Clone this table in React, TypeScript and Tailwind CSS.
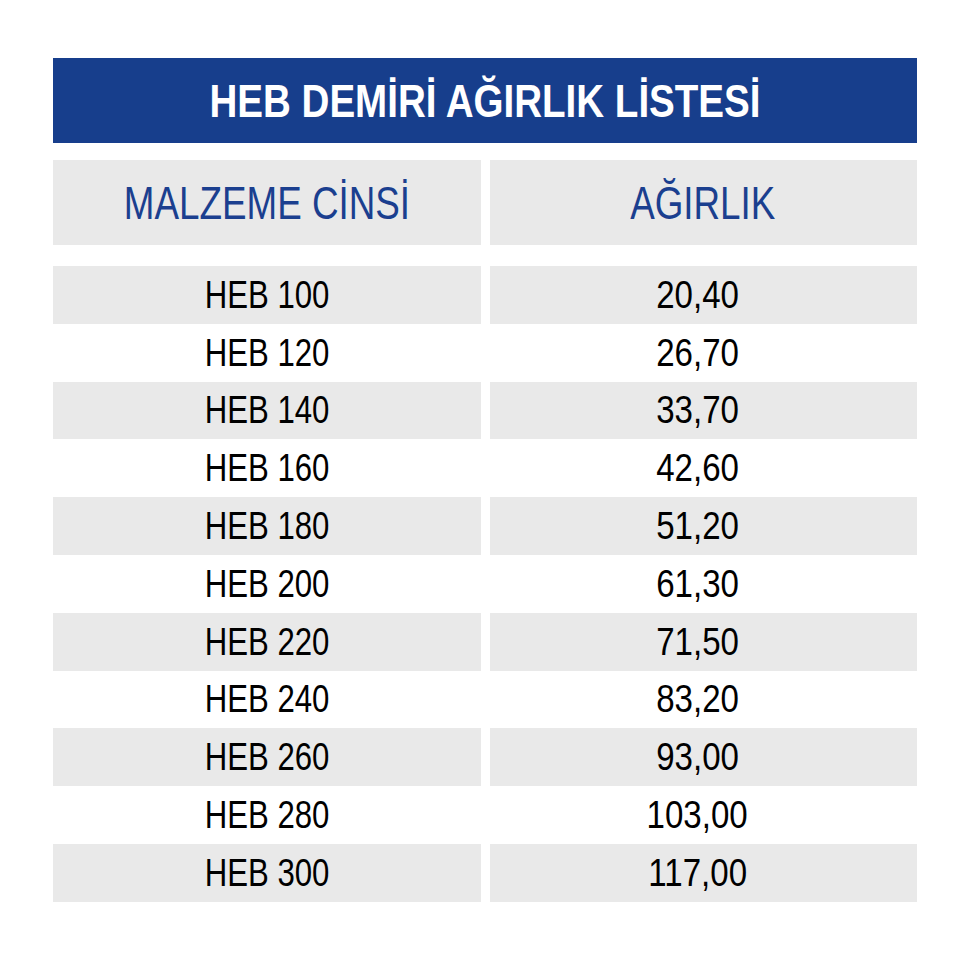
const rows: [string, string][] = [
  ["HEB 100", "20,40"],
  ["HEB 120", "26,70"],
  ["HEB 140", "33,70"],
  ["HEB 160", "42,60"],
  ["HEB 180", "51,20"],
  ["HEB 200", "61,30"],
  ["HEB 220", "71,50"],
  ["HEB 240", "83,20"],
  ["HEB 260", "93,00"],
  ["HEB 280", "103,00"],
  ["HEB 300", "117,00"],
];

// no narrow face installed, so squeeze Liberation Sans to Arial Narrow proportions
const App = () => {
  return (
    <div
      className="w-[978px] h-[960px] bg-white pt-[58px] pl-[53px]"
      style={{ fontFamily: '"Liberation Sans Narrow", "Liberation Sans", Arial, sans-serif' }}
    >
      <div className="w-[864px]">
        <div className="h-[85px] bg-[#173e8c] flex items-center justify-center">
          <h1 className="inline-block scale-x-[0.82] whitespace-nowrap text-white font-bold text-[47px] leading-none">
            HEB DEMİRİ AĞIRLIK LİSTESİ
          </h1>
        </div>

        <div className="grid grid-cols-2 gap-x-[9px] mt-[17px]">
          <div className="h-[85px] bg-[#e9e9e9] flex items-center justify-center">
            <span className="inline-block scale-x-[0.8] whitespace-nowrap text-[#1b3f8f] text-[46px] leading-none">
              MALZEME CİNSİ
            </span>
          </div>
          <div className="h-[85px] bg-[#e9e9e9] flex items-center justify-center">
            <span className="inline-block scale-x-[0.8] whitespace-nowrap text-[#1b3f8f] text-[46px] leading-none">
              AĞIRLIK
            </span>
          </div>
        </div>

        <div className="mt-[21px]">
          {rows.map(([name, weight], i) => (
            <div key={name} className="grid grid-cols-2 gap-x-[9px] h-[57.8px]">
              <div className={`flex items-center justify-center ${i % 2 === 0 ? "bg-[#e9e9e9]" : "bg-white"}`}>
                <span className="inline-block scale-x-[0.82] whitespace-nowrap text-black text-[38px] leading-none">
                  {name}
                </span>
              </div>
              <div className={`flex items-center justify-center pr-[12px] ${i % 2 === 0 ? "bg-[#e9e9e9]" : "bg-white"}`}>
                <span className="inline-block scale-x-[0.87] whitespace-nowrap text-black text-[38px] leading-none">
                  {weight}
                </span>
              </div>
            </div>
          ))}
        </div>
      </div>
    </div>
  );
};

export default App;
